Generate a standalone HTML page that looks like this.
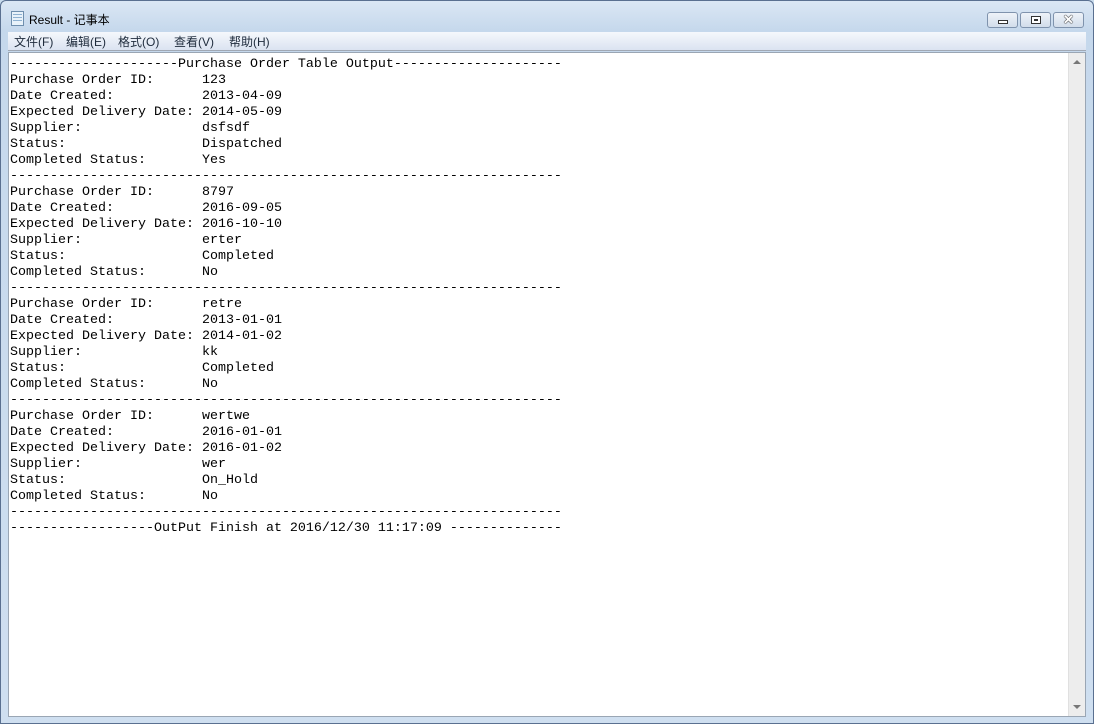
<!DOCTYPE html>
<html><head><meta charset="utf-8"><style>
*{margin:0;padding:0;box-sizing:border-box}
body{width:1094px;height:724px;overflow:hidden;background:#c9dced;position:relative;font-family:"Liberation Sans","Noto Sans CJK SC",sans-serif}
.frame{position:absolute;left:0;top:0;width:1094px;height:724px;background:linear-gradient(#dbe7f4,#c5d8ec 30px,#cfdff0);border:1px solid #5a7090;border-radius:6px 6px 0 0}
.title{position:absolute;left:29px;top:11px;font-size:12px;color:#000}
.icon{position:absolute;left:11px;top:11px;width:13px;height:15px;background:#e8f2fa;border:1px solid #6f8fae}
.icon:before{content:"";position:absolute;left:1px;right:1px;top:2px;height:9px;background:repeating-linear-gradient(#8fb2d2 0 1px,transparent 1px 3px)}
.btn{position:absolute;top:12px;height:16px;border:1px solid #7f93ad;border-radius:3px;background:linear-gradient(#eef3f9,#d2ddeb)}
.menu{position:absolute;left:8px;top:32px;width:1078px;height:19px;background:linear-gradient(#f5f8fc,#dbe3f1);border-bottom:1px solid #a0a8b4;font-size:12px;color:#1e2b3c}
.menu span{position:absolute;top:1px}
.edit{position:absolute;left:8px;top:52px;width:1078px;height:665px;background:#fff;border:1px solid #9aa6b4}
.sb{position:absolute;right:0;top:0;width:17px;height:663px;background:#ededed;border-left:1px solid #e0e0e0}
pre{position:absolute;left:1px;top:4px;font-family:"Liberation Mono",monospace;font-size:13.33px;line-height:16px;color:#000}
</style></head><body>
<div class="frame"></div>
<div class="icon"></div>
<div class="title">Result - 记事本</div>
<div class="btn" style="left:987px;width:31px"><div style="position:absolute;left:10px;top:7px;width:10px;height:4px;border:1px solid #333;background:#fff"></div></div>
<div class="btn" style="left:1020px;width:31px"><div style="position:absolute;left:10px;top:3px;width:10px;height:8px;border:1px solid #333;background:#fff"></div><div style="position:absolute;left:13px;top:6px;width:4px;height:2px;background:#333"></div></div>
<div class="btn" style="left:1053px;width:31px;text-align:center;font-size:13px;line-height:14px;color:#fff;font-weight:bold;text-shadow:0 0 1px #222,0 0 1px #222,0 0 1px #222">✕</div>
<div class="menu"><span style="left:6px">文件(F)</span><span style="left:58px">编辑(E)</span><span style="left:110px">格式(O)</span><span style="left:166px">查看(V)</span><span style="left:221px">帮助(H)</span></div>
<div class="edit">
<pre>---------------------Purchase Order Table Output---------------------
Purchase Order ID:      123
Date Created:           2013-04-09
Expected Delivery Date: 2014-05-09
Supplier:               dsfsdf
Status:                 Dispatched
Completed Status:       Yes
---------------------------------------------------------------------
Purchase Order ID:      8797
Date Created:           2016-09-05
Expected Delivery Date: 2016-10-10
Supplier:               erter
Status:                 Completed
Completed Status:       No
---------------------------------------------------------------------
Purchase Order ID:      retre
Date Created:           2013-01-01
Expected Delivery Date: 2014-01-02
Supplier:               kk
Status:                 Completed
Completed Status:       No
---------------------------------------------------------------------
Purchase Order ID:      wertwe
Date Created:           2016-01-01
Expected Delivery Date: 2016-01-02
Supplier:               wer
Status:                 On_Hold
Completed Status:       No
---------------------------------------------------------------------
------------------OutPut Finish at 2016/12/30 11:17:09 --------------</pre>
<div class="sb">
<div style="position:absolute;left:4px;top:7px;width:0;height:0;border-left:4px solid transparent;border-right:4px solid transparent;border-bottom:4px solid #777"></div>
<div style="position:absolute;left:4px;bottom:7px;width:0;height:0;border-left:4px solid transparent;border-right:4px solid transparent;border-top:4px solid #777"></div>
</div>
</div>
</body></html>
